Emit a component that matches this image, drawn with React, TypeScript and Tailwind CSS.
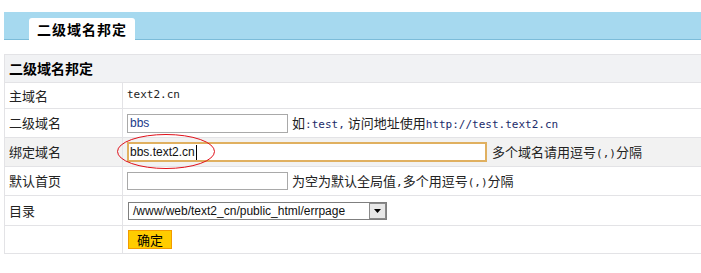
const cjk = { fontFamily: '"SimSun", "Noto Sans CJK SC", sans-serif' };
const mono = { fontFamily: '"DejaVu Sans Mono", "Liberation Mono", monospace' };
const arial = { fontFamily: '"Liberation Sans", Arial, sans-serif' };

function Row({
  label,
  h,
  gray,
  children,
}: {
  label?: string;
  h: string;
  gray?: boolean;
  children?: React.ReactNode;
}) {
  return (
    <div className={`flex border-b border-[#e3e3e6] ${h} ${gray ? "bg-[#f2f2f2]" : "bg-white"}`}>
      <div className="w-[118px] shrink-0 border-r border-[#e3e3e6] pl-1 flex items-center text-[13px] text-[#222]">
        {label}
      </div>
      <div className="flex-1 flex items-center pl-[4px] text-[13px] text-[#222]">{children}</div>
    </div>
  );
}

export default function App() {
  return (
    <div className="w-[701px] h-[273px] bg-white overflow-hidden" style={cjk}>
      <div className="mt-[12px] ml-[4px] h-[28px] bg-[#a6d9ef] border-b border-[#7cbcd9] flex items-end pl-[25px]">
        <div className="w-[106px] h-[22px] bg-white rounded-t-[3px] flex items-center justify-center text-[14px] font-bold tracking-[1px] text-black -mb-px">
          二级域名邦定
        </div>
      </div>

      <div className="mt-[14px] ml-[4px] border-t border-l border-[#e3e3e6]">
        <div className="h-[28px] bg-[#f1f2f4] border-b border-[#e3e3e6] flex items-center pl-1 text-[14px] font-bold text-black">
          二级域名邦定
        </div>
        <Row label="主域名" h="h-[26px]">
          <span className="text-[11px] text-[#222]" style={mono}>
            text2.cn
          </span>
        </Row>
        <Row label="二级域名" h="h-[29px]">
          <div
            className="w-[161px] h-[19px] border border-[#a9a9a9] flex items-center px-[2px] text-[12px] text-[#1a3a8a]"
            style={arial}
          >
            bbs
          </div>
          <span className="ml-[4px] whitespace-nowrap">
            如<span style={mono} className="text-[11px] text-[#1a2a6a]">:test,</span> 访问地址使用
            <span style={mono} className="text-[11px] text-[#1a2a6a]">http://test.text2.cn</span>
          </span>
        </Row>
        <Row label="绑定域名" h="h-[29px]" gray>
          <div className="relative">
            <div
              className="w-[360px] h-[20px] bg-white border-2 border-[#e0b060] flex items-center pl-[1px] text-[12px] text-[#111]"
              style={arial}
            >
              bbs.text2.cn
              <span className="inline-block w-px h-[15px] bg-black ml-px" />
            </div>
            <svg className="absolute left-[-11px] top-[-9px]" width="100" height="37" viewBox="0 0 100 37">
              <ellipse cx="50" cy="18.5" rx="48.5" ry="17" fill="none" stroke="#e0101a" strokeWidth="1" />
            </svg>
          </div>
          <span className="ml-[5px] whitespace-nowrap">
            多个域名请用逗号<span style={mono} className="text-[11px]">(,)</span>分隔
          </span>
        </Row>
        <Row label="默认首页" h="h-[29px]">
          <div className="w-[161px] h-[18px] border border-[#a9a9a9] bg-white" />
          <span className="ml-[4px] whitespace-nowrap">
            为空为默认全局值<span style={mono} className="text-[11px]">,</span>多个用逗号
            <span style={mono} className="text-[11px]">(,)</span>分隔
          </span>
        </Row>
        <Row label="目录" h="h-[30px]">
          <div className="ml-[1px] w-[259px] h-[18px] border border-[#7f7f7f] bg-white flex items-center justify-between">
            <span className="pl-[4px] text-[12px] text-[#111]" style={arial}>
              /www/web/text2_cn/public_html/errpage
            </span>
            <span className="w-[17px] h-[16px] bg-[#e8e8e8] border border-[#8a8a8a] flex items-center justify-center">
              <svg width="7" height="4" viewBox="0 0 7 4">
                <path d="M0 0h7L3.5 4z" fill="#000" />
              </svg>
            </span>
          </div>
        </Row>
        <Row h="h-[28px]">
          <button className="ml-[1px] w-[44px] h-[19px] bg-[#ffcc00] border border-[#f29b00] flex items-center justify-center text-[13px] text-black">
            确定
          </button>
        </Row>
      </div>
    </div>
  );
}
